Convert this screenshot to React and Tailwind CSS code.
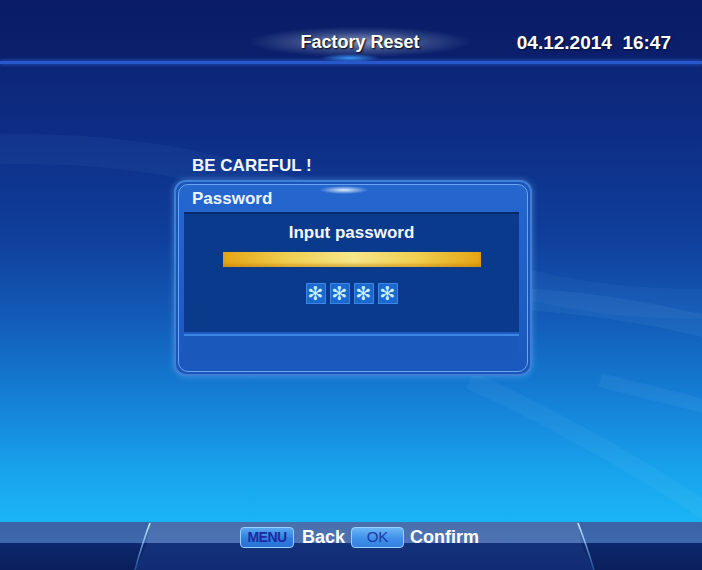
import React from "react";

const font = { fontFamily: '"Liberation Sans", Arial, sans-serif' };

function Header() {
  return (
    <div className="relative flex h-[61px] items-end pb-[4px]">
      <div className="relative ml-[250px] flex h-[30px] w-[220px] items-center justify-center bg-[radial-gradient(ellipse_at_center,rgba(170,185,215,0.75)_0%,rgba(90,110,160,0.45)_45%,rgba(20,40,110,0)_72%)]">
        <div className="absolute bottom-[-5px] left-[70px] h-[8px] w-[60px] rounded-full bg-[radial-gradient(ellipse_at_center,rgba(60,160,255,0.95)_0%,rgba(40,120,255,0)_70%)]" />
        <span className="relative text-[18px] font-bold text-white [text-shadow:1px_1px_2px_#000]">
          Factory Reset
        </span>
      </div>
      <div className="mb-[0px] ml-auto mr-[31px] text-[19px] font-bold leading-[28px] text-white [text-shadow:1px_1px_2px_#00103a]">
        04.12.2014&nbsp;&nbsp;16:47
      </div>
    </div>
  );
}

function Star() {
  return (
    <div className="flex h-[21px] w-[20px] items-center justify-center border border-[#3a86e6] bg-[#1c68cf] text-[19px] leading-none text-[#c6f0ff] [font-family:'DejaVu_Sans',sans-serif]">
      ✻
    </div>
  );
}

function Dialog() {
  return (
    <div className="ml-[174px] w-[358px]">
      <div className="pl-[18px] text-[17px] font-bold leading-[20px] text-[#f2f6ff]">BE CAREFUL !</div>
      <div className="mt-[4px] rounded-[12px] border-2 border-[#3f7fd8] bg-[#1a56ba] p-[2px] shadow-[0_0_6px_rgba(120,190,255,0.5)]">
        <div className="relative flex h-[188px] flex-col overflow-hidden rounded-[10px] border border-[#6aa6ee] bg-[linear-gradient(180deg,#2566cf_0%,#1b58bd_100%)]">
          <div className="absolute left-[140px] top-[1px] h-[8px] w-[50px] rounded-full bg-[radial-gradient(ellipse_at_center,rgba(230,245,255,0.95)_0%,rgba(150,210,255,0)_70%)]" />
          <div className="flex h-[27px] items-center pl-[13px] text-[17px] font-bold text-[#eef4ff]">Password</div>
          <div className="ml-[5px] mr-[8px] flex h-[120px] flex-col items-center border-t-2 border-[#072a6a] bg-[#0a3a8c] pt-[9px]">
            <div className="text-[17px] font-bold leading-[20px] text-[#f4f6ff]">Input password</div>
            <div className="mt-[9px] h-[15px] w-[258px] bg-[linear-gradient(90deg,#e4a414_0%,#f0cf50_25%,#f6e68a_50%,#f0cf50_75%,#e4a414_100%)] shadow-[inset_0_-3px_3px_rgba(190,120,0,0.45)]" />
            <div className="mt-[16px] flex gap-[4px]">
              <Star />
              <Star />
              <Star />
              <Star />
            </div>
          </div>
          <div className="ml-[5px] mr-[8px] mt-[2px] h-[29px] border-t-2 border-[#3f86e4] bg-[#1a58bb]" />
        </div>
      </div>
    </div>
  );
}

function Footer() {
  return (
    <div className="relative h-[48px] bg-[linear-gradient(180deg,#3a62a6_0px,#3f68ae_21px,#0d286e_21px,#0a1f5c_48px)]">
      <svg className="absolute inset-0" width="702" height="48" viewBox="0 0 702 48">
        <defs>
          <linearGradient id="ln" x1="0" y1="0" x2="0" y2="1">
            <stop offset="0" stopColor="#cfefff" />
            <stop offset="1" stopColor="#5aa8ff" stopOpacity="0.3" />
          </linearGradient>
        </defs>
        <polygon points="150,0 578,0 581,21 147,21" fill="#ffffff" fillOpacity="0.08" />
        <polygon points="147,21 581,21 594,48 135,48" fill="#1a3a8a" fillOpacity="0.5" />
        <path d="M150 1 Q142 22 135 48" stroke="url(#ln)" strokeWidth="1.6" fill="none" />
        <path d="M578 1 Q586 22 594 48" stroke="url(#ln)" strokeWidth="1.6" fill="none" />
      </svg>
      <div className="relative ml-[240px] flex h-[30px] items-center pt-[1px]">
        <div className="flex h-[21px] w-[54px] items-center justify-center rounded-[4px] border border-[#9ad0ff] bg-[linear-gradient(180deg,#5aa8f2_0%,#2f7ee0_55%,#2a6fd4_100%)] text-[14px] font-bold tracking-[-0.5px] text-[#1c2aa0]">
          MENU
        </div>
        <span className="ml-[8px] text-[18px] font-bold text-white">Back</span>
        <div className="ml-[6px] flex h-[21px] w-[53px] items-center justify-center rounded-[4px] border border-[#9ad0ff] bg-[linear-gradient(180deg,#6cb6f6_0%,#3f90ea_55%,#3480e0_100%)] text-[15px] text-[#1c3aa8]">
          OK
        </div>
        <span className="ml-[6px] text-[18px] font-bold text-white">Confirm</span>
      </div>
    </div>
  );
}

export default function App() {
  return (
    <div
      style={font}
      className="relative flex h-[570px] w-[702px] flex-col overflow-hidden bg-[linear-gradient(180deg,#0a1c66_0px,#0b1f6c_60px,#0c2678_70px,#0d2e86_140px,#0f409c_240px,#125cb8_320px,#1580d6_400px,#18a2ec_470px,#1ab4f4_520px)]"
    >
      <svg className="pointer-events-none absolute inset-0" width="702" height="570" viewBox="0 0 702 570">
        <path d="M-20 150 Q200 140 380 230 T760 300" stroke="#8ac8ff" strokeOpacity="0.05" strokeWidth="30" fill="none" />
        <path d="M420 300 Q560 290 720 330" stroke="#a0d8ff" strokeOpacity="0.07" strokeWidth="22" fill="none" />
        <path d="M470 380 Q600 440 720 520" stroke="#c0ecff" strokeOpacity="0.05" strokeWidth="18" fill="none" />
        <path d="M600 380 Q660 395 720 410" stroke="#c0ecff" strokeOpacity="0.06" strokeWidth="14" fill="none" />
      </svg>
      <Header />
      <div className="relative h-[3px] bg-[#2658cc] shadow-[0_0_4px_rgba(60,120,255,0.8)]" />
      <div className="relative flex-1 pt-[92px]">
        <Dialog />
      </div>
      <Footer />
    </div>
  );
}
